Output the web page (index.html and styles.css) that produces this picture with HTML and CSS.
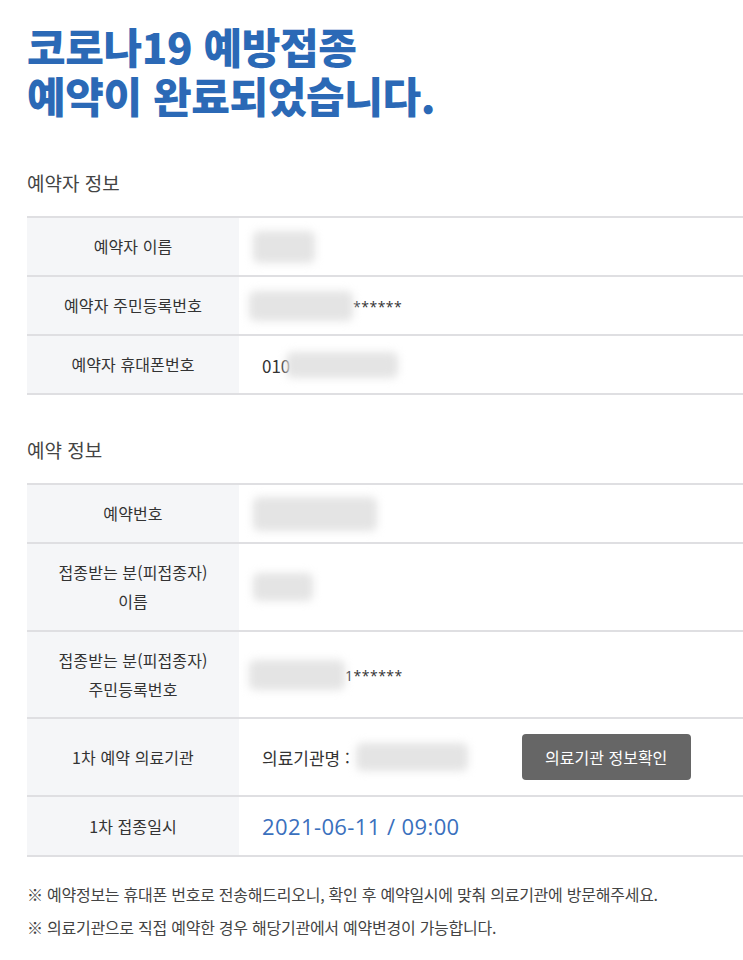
FILE: index.html
```html
<!DOCTYPE html>
<html lang="ko">
<head>
<meta charset="utf-8">
<title>예약 완료</title>
<link rel="stylesheet" href="styles.css">
</head>
<body>
<main class="page">
  <h1 class="title"><span class="title-line">코로나19 예방접종</span><span class="title-line">예약이 완료되었습니다.</span></h1>

  <h2 class="section-title">예약자 정보</h2>
  <table class="info">
    <tr class="r59">
      <th>예약자 이름</th>
      <td><span class="blur b-name1"></span></td>
    </tr>
    <tr class="r59">
      <th>예약자 주민등록번호</th>
      <td><span class="blur b-ssn1"></span><span class="mask">******</span></td>
    </tr>
    <tr class="r59">
      <th>예약자 휴대폰번호</th>
      <td class="pad"><span class="txt">010</span><span class="blur b-phone"></span></td>
    </tr>
  </table>

  <h2 class="section-title s2">예약 정보</h2>
  <table class="info">
    <tr class="r59">
      <th>예약번호</th>
      <td><span class="blur b-num"></span></td>
    </tr>
    <tr class="r88">
      <th>접종받는 분(피접종자)<br>이름</th>
      <td><span class="blur b-name2"></span></td>
    </tr>
    <tr class="r87">
      <th>접종받는 분(피접종자)<br>주민등록번호</th>
      <td><span class="blur b-ssn2"></span><span class="mask">1******</span></td>
    </tr>
    <tr class="r78">
      <th>1차 예약 의료기관</th>
      <td class="pad">
        <div class="hosp">
          <span class="txt">의료기관명 :</span><span class="blur b-hosp"></span>
          <button class="btn" type="button">의료기관 정보확인</button>
        </div>
      </td>
    </tr>
    <tr class="r60">
      <th>1차 접종일시</th>
      <td class="pad"><span class="date">2021-06-11 / 09:00</span></td>
    </tr>
  </table>

  <ul class="notes">
    <li>※ 예약정보는 휴대폰 번호로 전송해드리오니, 확인 후 예약일시에 맞춰 의료기관에 방문해주세요.</li>
    <li>※ 의료기관으로 직접 예약한 경우 해당기관에서 예약변경이 가능합니다.</li>
  </ul>
</main>
</body>
</html>
```

FILE: styles.css
```css
html, body {
  margin: 0;
  padding: 0;
  background: #fff;
}

body {
  font-family: "Noto Sans CJK KR", "Noto Sans", sans-serif;
  color: #333;
  overflow: hidden;
}

.page {
  padding: 21px 0 0 27px;
}

.title {
  margin: 0;
  font-size: 42px;
  line-height: 49px;
  font-weight: 900;
  letter-spacing: -0.4px;
  color: #2b69b6;
}

.title-line {
  display: block;
  height: 49px;
}

.section-title {
  margin: 51px 0 0;
  font-size: 19px;
  line-height: 26px;
  font-weight: 400;
  color: #444;
  letter-spacing: 0;
}

.section-title.s2 {
  margin-top: 42px;
}

.info {
  margin-top: 20px;
  width: 716px;
  border-collapse: collapse;
  border-top: 2px solid #dfdfe2;
}

.info th,
.info td {
  border-bottom: 2px solid #dfdfe2;
  padding: 0;
}

.info th {
  width: 212px;
  background: #f5f6f8;
  font-weight: 400;
  font-size: 16px;
  line-height: 29px;
  color: #333;
  letter-spacing: 0.1px;
  text-align: center;
}

.info td {
  text-align: left;
  padding-left: 10px;
  font-size: 16px;
  color: #333;
}

.info td.pad {
  padding-left: 23px;
}

.r59 { height: 59px; }
.r60 { height: 60px; }
.r78 { height: 78px; }
.r87 { height: 87px; }
.r88 { height: 88px; }

.blur {
  display: inline-block;
  vertical-align: middle;
  background: #e4e4e4;
  filter: blur(4px);
  border-radius: 6px;
}

.b-name1 { width: 62px; height: 32px; margin-left: 4px; }
.b-ssn1 { width: 104px; height: 30px; }
.b-phone { width: 112px; height: 26px; margin-left: -4px; }
.b-num { width: 124px; height: 34px; margin-left: 4px; }
.b-name2 { width: 60px; height: 28px; margin-left: 4px; }
.b-ssn2 { width: 96px; height: 30px; }
.b-hosp { width: 112px; height: 28px; margin-left: 6px; }

.mask {
  vertical-align: middle;
  font-family: "Open Sans", "Noto Sans", sans-serif;
  font-size: 14px;
  letter-spacing: 0.5px;
  color: #333;
}

.txt {
  vertical-align: middle;
  font-size: 17px;
  color: #333;
  letter-spacing: 0;
}

.hosp {
  display: flex;
  align-items: center;
}

.hosp .blur {
  margin-right: 54px;
}

.btn {
  width: 169px;
  height: 46px;
  border: 0;
  border-radius: 4px;
  background: #666;
  color: #fff;
  font-family: "Noto Sans CJK KR", sans-serif;
  font-size: 16px;
  letter-spacing: 0;
  cursor: pointer;
}

.date {
  font-family: "Open Sans", "Noto Sans", sans-serif;
  font-size: 22px;
  letter-spacing: 0.4px;
  color: #3a70bd;
}

.notes {
  list-style: none;
  margin: 21px 0 0;
  padding: 0;
  font-size: 16px;
  line-height: 33px;
  color: #444;
  letter-spacing: -0.25px;
}
```
